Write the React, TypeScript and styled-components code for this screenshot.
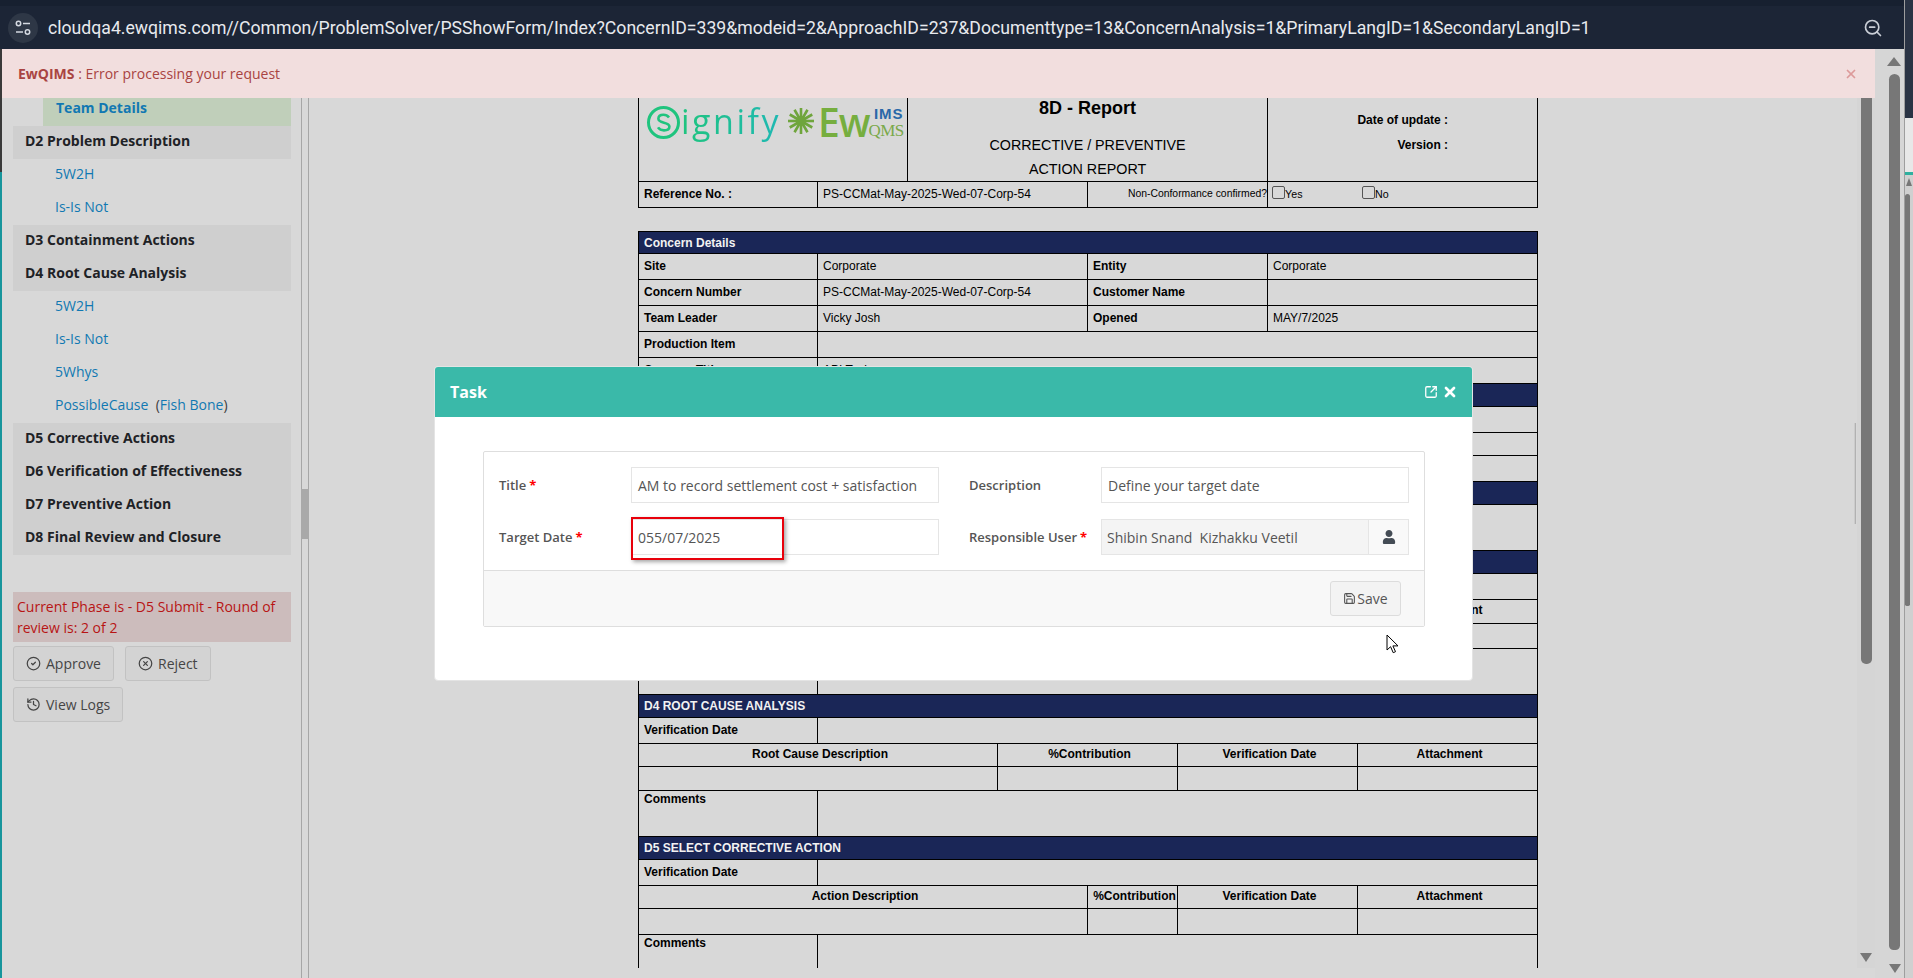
import styled, { createGlobalStyle } from "styled-components";
import {
  CircleCheck,
  CircleX,
  History,
  Save,
  SquareArrowOutUpRight,
  X,
  ZoomOut,
} from "lucide-react";
import { FaUser } from "react-icons/fa";

const GlobalStyle = createGlobalStyle`
  html, body {
    margin: 0;
    padding: 0;
    background: #d8d8d8;
    overflow: hidden;
  }
  * {
    box-sizing: border-box;
  }
`;

const Screen = styled.div`
  position: relative;
  display: flex;
  width: 1913px;
  height: 978px;
  overflow: hidden;
  background: #d8d8d8;
  font-family: "Open Sans", "Noto Sans", sans-serif;
  font-size: 14px;
`;

const Browser = styled.div`
  flex: 1;
  min-width: 0;
  display: flex;
  flex-direction: column;
`;

const TopBar = styled.header`
  height: 49px;
  flex: none;
  display: flex;
  align-items: center;
  padding: 6px 21px 0 8px;
  background: #1c2536;
  box-shadow: inset 0 6px 0 #172030;
`;

const SiteButton = styled.span`
  width: 30px;
  height: 30px;
  flex: none;
  display: flex;
  align-items: center;
  justify-content: center;
  margin: 0 10px 0 0;
  border-radius: 50%;
  background: #2e3746;
`;

const Url = styled.span`
  flex: 1;
  color: #e8eaee;
  font-family: Roboto, "Noto Sans", sans-serif;
  font-size: 17.65px;
  white-space: nowrap;
`;

const Body = styled.div`
  flex: 1;
  min-height: 0;
  display: flex;
`;

const LeftEdge = styled.div`
  width: 2px;
  flex: none;
  display: flex;
  flex-direction: column;
`;

const EdgeDark = styled.div`
  height: 123px;
  background: #3a3a3a;
`;

const EdgeTeal = styled.div`
  flex: 1;
  background: #17959c;
`;

const Page = styled.div`
  flex: 1;
  min-width: 0;
  display: flex;
  flex-direction: column;
`;

const Alert = styled.div`
  height: 49px;
  flex: none;
  display: flex;
  align-items: center;
  justify-content: space-between;
  padding: 0 17px 0 16px;
  background: #f2dede;
  color: #a94442;
  font-size: 14px;
  b {
    font-weight: 700;
  }
`;

const AlertClose = styled.span`
  display: flex;
  color: #dd9a9a;
`;

const Workspace = styled.div`
  flex: 1;
  min-height: 0;
  display: flex;
`;

const Sidebar = styled.nav`
  width: 299px;
  flex: none;
  padding-left: 11px;
  padding-right: 10px;
`;

const TeamRow = styled.a`
  display: flex;
  align-items: center;
  height: 28px;
  padding: 0 0 9px 13px;
  margin-left: 30px;
  background: #c0cfba;
  color: #1178b2;
  font-weight: 700;
`;

const MenuHead = styled.div`
  height: 33px;
  display: flex;
  align-items: center;
  padding: 0 0 5px 12px;
  background: #cfcfcf;
  color: #1e2226;
  font-weight: 700;
  white-space: pre;
`;

const MenuLink = styled.a`
  height: 33px;
  display: flex;
  align-items: center;
  padding: 0 0 5px 42px;
  color: #1178b2;
  white-space: pre;
`;

const Paren = styled.span`
  color: #3d3d3d;
`;

const PhaseBox = styled.div`
  margin-top: 37px;
  height: 50px;
  padding: 4px 4px;
  background: #ccbcbc;
  color: #b81414;
  line-height: 21px;
`;

const ActionRow = styled.div<{ $top: number }>`
  display: flex;
  gap: 11px;
  margin-top: ${(p) => p.$top}px;
`;

const ActionButton = styled.button`
  height: 35px;
  display: flex;
  align-items: center;
  gap: 5px;
  padding: 0 12px;
  border: 1px solid #c2c2c2;
  border-radius: 3px;
  background: #d3d3d3;
  color: #454545;
  font-family: inherit;
  font-size: 14px;
`;

const Splitter = styled.div`
  width: 8px;
  flex: none;
  border-left: 1px solid #a6a6a6;
  border-right: 1px solid #a6a6a6;
  padding-top: 391px;
`;

const SplitHandle = styled.div`
  height: 50px;
  margin-left: -1px;
  margin-right: -1px;
  background: #a9a9a9;
`;

const Main = styled.main`
  flex: 1;
  min-width: 0;
  height: 870px;
  display: flex;
`;

const Doc = styled.div`
  position: relative;
  flex: 1;
  min-width: 0;
  height: 870px;
  overflow: hidden;
  padding-left: 329px;
`;

const ScrollHint = styled.div`
  position: absolute;
  right: 1px;
  top: 325px;
  width: 2px;
  height: 101px;
  background: linear-gradient(to right, #d8d8d8, #a4a4a4);
`;

const Sheet = styled.table<{ $gap?: number }>`
  width: 899px;
  table-layout: fixed;
  border-collapse: collapse;
  font-family: "Liberation Sans", Arial, sans-serif;
  font-size: 12px;
  color: #000;
  margin-bottom: ${(p) => p.$gap ?? 0}px;
`;

const GridCol = styled.col`
  width: 90px;
  &:first-child {
    width: 89px;
  }
`;

const Row = styled.tr<{ $h: number }>`
  height: ${(p) => p.$h}px;
`;

const Cell = styled.td<{ $b?: boolean; $center?: boolean; $top?: boolean; $noTop?: boolean }>`
  padding: ${(p) => (p.$top ? "1px 5px 0" : p.$center ? "0 1px 3px 5px" : "0 5px 2px")};
  border: 1px solid #000;
  border-top: ${(p) => (p.$noTop ? "0" : "1px solid #000")};
  font-weight: ${(p) => (p.$b ? 700 : 400)};
  text-align: ${(p) => (p.$center ? "center" : "left")};
  vertical-align: ${(p) => (p.$top ? "top" : "middle")};
  white-space: nowrap;
  overflow: hidden;
`;

const NavyCell = styled.td`
  padding: 0 5px;
  border: 1px solid #000;
  background: #1a2657;
  color: #f2f2f2;
  font-weight: 700;
  white-space: nowrap;
`;

const LogoCell = styled(Cell)`
  padding: 8px 0 0 8px;
  vertical-align: top;
  overflow: visible;
`;

const Logo = styled.div`
  display: flex;
  align-items: flex-start;
  height: 44px;
`;

const SignifyWord = styled.span`
  margin: -7px 0 0 1px;
  width: 102px;
  height: 46px;
  font-family: "Open Sans", sans-serif;
  font-size: 34px;
  line-height: 44px;
  letter-spacing: 2.5px;
  background: linear-gradient(to right, #1fc47e, #1fb8b4);
  -webkit-background-clip: text;
  background-clip: text;
  color: transparent;
`;

const EwWord = styled.span`
  margin: -7px 0 0 3px;
  color: #76ae3f;
  font-family: "Open Sans", sans-serif;
  font-size: 39px;
  line-height: 46px;
  font-weight: 600;
  letter-spacing: -1px;
`;

const QimsStack = styled.span`
  display: flex;
  flex-direction: column;
  align-items: flex-end;
  width: 35px;
  margin: 1px 0 0 -1px;
`;

const ImsWord = styled.span`
  color: #2a68a8;
  font-family: "Liberation Sans", sans-serif;
  font-size: 15px;
  line-height: 14px;
  font-weight: 700;
  letter-spacing: 1px;
`;

const QmsWord = styled.span`
  color: #7aa94a;
  font-family: "Liberation Serif", serif;
  font-size: 17px;
  line-height: 19px;
  letter-spacing: -0.6px;
`;

const TitleCell = styled(Cell)`
  padding: 0;
  text-align: center;
  vertical-align: top;
`;

const ReportTitle = styled.div`
  height: 35px;
  font-size: 18px;
  font-weight: 700;
  line-height: 20px;
`;

const ReportSub = styled.div`
  font-size: 14.3px;
  line-height: 24px;
`;

const MetaCell = styled(Cell)`
  padding: 10px 89px 0 0;
  vertical-align: top;
  text-align: right;
  font-weight: 700;
  line-height: 25px;
`;

const ConfirmCell = styled(Cell)`
  padding: 0 0 2px;
  text-align: right;
  font-size: 10.4px;
`;

const CheckCell = styled(Cell)`
  padding: 0 0 2px 4px;
`;

const CheckGroup = styled.span`
  display: flex;
  align-items: flex-start;
  font-size: 10.67px;
`;

const CheckItem = styled.label`
  display: flex;
  align-items: flex-end;
  width: 90px;
`;

const CheckBox = styled.input`
  appearance: none;
  width: 13px;
  height: 13px;
  margin: -1px 0 1px;
  border: 1px solid #555;
  border-radius: 2px;
  background: transparent;
`;

const OuterScroll = styled.div`
  width: 29px;
  flex: none;
  display: flex;
  flex-direction: column;
  align-items: flex-end;
  padding: 8px 4px 0 0;
  background: #d6d6d6;
`;

const MainScroll = styled.div`
  width: 18px;
  flex: none;
  height: 870px;
  display: flex;
  flex-direction: column;
  align-items: center;
  background: #d5d5d5;
`;

const Thumb = styled.div<{ $h: number; $top?: number }>`
  width: 11px;
  height: ${(p) => p.$h}px;
  flex: none;
  margin-top: ${(p) => p.$top ?? 0}px;
  background: #777;
  border-radius: ${(p) => (p.$h > 600 ? "6px 6px 5px 5px" : "0 0 5px 5px")};
`;

const ArrowUp = styled.div`
  width: 0;
  height: 0;
  margin-right: -1px;
  border-left: 7px solid transparent;
  border-right: 7px solid transparent;
  border-bottom: 9px solid #777;
`;

const ArrowDown = styled.div<{ $top: number; $shift?: number }>`
  width: 0;
  height: 0;
  margin-top: ${(p) => p.$top}px;
  margin-right: ${(p) => p.$shift ?? 0}px;
  border-left: 6px solid transparent;
  border-right: 6px solid transparent;
  border-top: 9px solid #777;
`;

const RightEdge = styled.aside`
  width: 9px;
  flex: none;
  display: flex;
  flex-direction: column;
  background: #d0d0d0;
  border-left: 1px solid #9e9e9e;
`;

const EdgeTop = styled.div`
  height: 118px;
  background: #2a3344;
`;

const EdgeLight = styled.div`
  height: 54px;
  background: #e8e8e8;
`;

const EdgeStripe = styled.div`
  height: 3px;
  background: #2fb09f;
`;

const EdgeArrow = styled.div`
  width: 0;
  height: 0;
  margin: 3px 0 8px 1px;
  border-left: 3px solid transparent;
  border-right: 3px solid transparent;
  border-bottom: 8px solid #777;
`;

const EdgeThumb = styled.div`
  width: 5px;
  height: 412px;
  background: #777;
  border-radius: 3px 3px 2px 2px;
`;

const Modal = styled.section`
  position: absolute;
  left: 434px;
  top: 366px;
  width: 1039px;
  height: 315px;
  display: flex;
  flex-direction: column;
  background: #fff;
  border: 1px solid #e4e4e4;
  border-radius: 4px;
`;

const ModalHead = styled.div`
  height: 50px;
  flex: none;
  display: flex;
  align-items: center;
  justify-content: space-between;
  padding: 0 14px 0 15px;
  background: #3ab9a9;
  border-radius: 3px 3px 0 0;
  color: #fff;
  font-size: 16px;
  font-weight: 700;
`;

const ModalTools = styled.div`
  display: flex;
  align-items: center;
  gap: 4px;
`;

const ModalBody = styled.div`
  padding: 34px 47px 0 48px;
`;

const Panel = styled.div`
  height: 176px;
  display: flex;
  flex-direction: column;
  border: 1px solid #dedede;
  border-radius: 2px;
`;

const FormGrid = styled.div`
  height: 118px;
  flex: none;
  display: grid;
  grid-template-columns: 132px 338px 132px 308px;
  grid-template-rows: 36px 36px;
  row-gap: 16px;
  padding: 15px 0 0 15px;
  align-items: center;
`;

const Label = styled.label`
  color: #555;
  font-size: 13px;
  font-weight: 600;
  white-space: nowrap;
`;

const Req = styled.span`
  margin-left: 3px;
  color: #f00;
  font-weight: 700;
`;

const FieldText = styled.div`
  width: 308px;
  height: 36px;
  display: flex;
  align-items: center;
  padding: 0 6px;
  border: 1px solid #e5e5e5;
  background: #fff;
  color: #555;
  font-size: 14px;
  white-space: pre;
`;

const DateField = styled(FieldText)`
  position: relative;
`;

const RedMark = styled.span`
  position: absolute;
  left: -1px;
  top: -3px;
  width: 153px;
  height: 43px;
  border: 2px solid #e8000b;
  box-shadow: 2px 2px 4px rgba(0, 0, 0, 0.35);
`;

const UserField = styled.div`
  height: 36px;
  display: flex;
  border: 1px solid #e5e5e5;
`;

const UserName = styled.div`
  flex: 1;
  display: flex;
  align-items: center;
  padding: 0 5px;
  background: #f4f4f4;
  color: #555;
  font-size: 14px;
  white-space: pre;
`;

const UserAddon = styled.div`
  width: 40px;
  flex: none;
  display: flex;
  align-items: center;
  justify-content: center;
  border-left: 1px solid #e5e5e5;
  background: #f9f9f9;
  color: #444c55;
`;

const PanelFoot = styled.div`
  flex: 1;
  display: flex;
  align-items: center;
  justify-content: flex-end;
  padding-right: 23px;
  border-top: 1px solid #dedede;
  background: #f8f8f8;
`;

const SaveButton = styled.button`
  width: 71px;
  height: 35px;
  display: flex;
  align-items: center;
  justify-content: center;
  gap: 1px;
  padding: 0;
  border: 1px solid #dcdcdc;
  border-radius: 3px;
  background: #f3f3f3;
  color: #555;
  font-family: inherit;
  font-size: 14px;
`;

const Pointer = styled.svg`
  position: absolute;
  left: 951px;
  top: 267px;
`;

const FlowerMark = styled.svg`
  flex: none;
  margin: 1px 0 0 4px;
`;

function TuneIcon() {
  return (
    <svg width="16" height="16" viewBox="0 0 16 16" fill="none" stroke="#d5dae2" strokeWidth="1.5">
      <circle cx="3.5" cy="3.5" r="2.2" />
      <path d="M8 3.5h7" />
      <path d="M1 12h7" />
      <circle cx="12.5" cy="12" r="2.2" />
    </svg>
  );
}

function SignifyMark() {
  return (
    <svg width="33" height="33" viewBox="0 0 33 33" fill="none" stroke="#1fc47e">
      <circle cx="16.5" cy="16.5" r="15" strokeWidth="3" />
      <path d="M22 11.5c-1.5-2-3.4-2.7-5.6-2.7-3 0-5 1.6-5 3.9 0 5.2 11 2.7 11 7.8 0 2.4-2.2 3.9-5.4 3.9-2.6 0-4.7-1-6-3" strokeWidth="2.6" />
    </svg>
  );
}

function Flower() {
  const spokes = [0, 30, 60, 90, 120, 150];
  return (
    <FlowerMark width="28" height="28" viewBox="0 0 28 28">
      <g stroke="#6fa53c" strokeWidth="2.6">
        {spokes.map((a) => (
          <path key={a} d="M14 1v26" transform={`rotate(${a} 14 14)`} />
        ))}
      </g>
      <circle cx="14" cy="14" r="5" fill="#6fa53c" />
    </FlowerMark>
  );
}

function Attach4({ first, second }: { first: string; second: number }) {
  return (
    <Row $h={23}>
      <Cell colSpan={second} $b $center>{first}</Cell>
      <Cell colSpan={6 - second} $b $center>%Contribution</Cell>
      <Cell colSpan={2} $b $center>Verification Date</Cell>
      <Cell colSpan={2} $b $center>Attachment</Cell>
    </Row>
  );
}

function Empty4({ second, h }: { second: number; h: number }) {
  return (
    <Row $h={h}>
      <Cell colSpan={second} />
      <Cell colSpan={6 - second} />
      <Cell colSpan={2} />
      <Cell colSpan={2} />
    </Row>
  );
}

function LabelRow({ label, h = 26 }: { label: string; h?: number }) {
  return (
    <Row $h={h}>
      <Cell colSpan={2} $b $top={h > 30}>{label}</Cell>
      <Cell colSpan={8} />
    </Row>
  );
}

function Navy({ title }: { title: string }) {
  return (
    <Row $h={23}>
      <NavyCell colSpan={10}>{title}</NavyCell>
    </Row>
  );
}

function Cols() {
  return (
    <colgroup>
      {Array.from({ length: 10 }).map((_, i) => (
        <GridCol key={i} />
      ))}
    </colgroup>
  );
}

export default function App() {
  return (
    <Screen>
      <GlobalStyle />
      <Browser>
        <TopBar>
          <SiteButton>
            <TuneIcon />
          </SiteButton>
          <Url>cloudqa4.ewqims.com//Common/ProblemSolver/PSShowForm/Index?ConcernID=339&amp;modeid=2&amp;ApproachID=237&amp;Documenttype=13&amp;ConcernAnalysis=1&amp;PrimaryLangID=1&amp;SecondaryLangID=1</Url>
          <ZoomOut size={20} color="#c9ced6" strokeWidth={2} />
        </TopBar>
        <Body>
          <LeftEdge>
            <EdgeDark />
            <EdgeTeal />
          </LeftEdge>
          <Page>
            <Alert>
              <span>
                <b>EwQIMS</b> : Error processing your request
              </span>
              <AlertClose>
                <X size={14} strokeWidth={3} />
              </AlertClose>
            </Alert>
            <Workspace>
              <Sidebar>
                <TeamRow>Team Details</TeamRow>
                <MenuHead>D2 Problem Description</MenuHead>
                <MenuLink>5W2H</MenuLink>
                <MenuLink>Is-Is Not</MenuLink>
                <MenuHead>D3 Containment Actions</MenuHead>
                <MenuHead>D4 Root Cause Analysis</MenuHead>
                <MenuLink>5W2H</MenuLink>
                <MenuLink>Is-Is Not</MenuLink>
                <MenuLink>5Whys</MenuLink>
                <MenuLink>
                  PossibleCause  <Paren>(</Paren>Fish Bone<Paren>)</Paren>
                </MenuLink>
                <MenuHead>D5 Corrective Actions</MenuHead>
                <MenuHead>D6 Verification of Effectiveness</MenuHead>
                <MenuHead>D7 Preventive Action</MenuHead>
                <MenuHead>D8 Final Review and Closure</MenuHead>
                <PhaseBox>Current Phase is - D5 Submit - Round of review is: 2 of 2</PhaseBox>
                <ActionRow $top={4}>
                  <ActionButton>
                    <CircleCheck size={15} />
                    Approve
                  </ActionButton>
                  <ActionButton>
                    <CircleX size={15} />
                    Reject
                  </ActionButton>
                </ActionRow>
                <ActionRow $top={6}>
                  <ActionButton>
                    <History size={15} />
                    View Logs
                  </ActionButton>
                </ActionRow>
              </Sidebar>
              <Splitter>
                <SplitHandle />
              </Splitter>
              <Main>
                <Doc>
                  <Sheet $gap={23}>
                    <Cols />
                    <tbody>
                      <Row $h={82}>
                        <LogoCell colSpan={3} $noTop>
                          <Logo>
                            <SignifyMark />
                            <SignifyWord>ignify</SignifyWord>
                            <Flower />
                            <EwWord>Ew</EwWord>
                            <QimsStack>
                              <ImsWord>IMS</ImsWord>
                              <QmsWord>QMS</QmsWord>
                            </QimsStack>
                          </Logo>
                        </LogoCell>
                        <TitleCell colSpan={4} $noTop>
                          <ReportTitle>8D - Report</ReportTitle>
                          <ReportSub>CORRECTIVE / PREVENTIVE</ReportSub>
                          <ReportSub>ACTION REPORT</ReportSub>
                        </TitleCell>
                        <MetaCell colSpan={3} $noTop>
                          <div>Date of update :</div>
                          <div>Version :</div>
                        </MetaCell>
                      </Row>
                      <Row $h={26}>
                        <Cell colSpan={2} $b>Reference No. :</Cell>
                        <Cell colSpan={3}>PS-CCMat-May-2025-Wed-07-Corp-54</Cell>
                        <ConfirmCell colSpan={2}>Non-Conformance confirmed?</ConfirmCell>
                        <CheckCell colSpan={3}>
                          <CheckGroup>
                            <CheckItem>
                              <CheckBox type="checkbox" />
                              Yes
                            </CheckItem>
                            <CheckItem>
                              <CheckBox type="checkbox" />
                              No
                            </CheckItem>
                          </CheckGroup>
                        </CheckCell>
                      </Row>
                    </tbody>
                  </Sheet>
                  <Sheet>
                    <Cols />
                    <tbody>
                      <Row $h={22}>
                        <NavyCell colSpan={10}>Concern Details</NavyCell>
                      </Row>
                      <Row $h={26}>
                        <Cell colSpan={2} $b>Site</Cell>
                        <Cell colSpan={3}>Corporate</Cell>
                        <Cell colSpan={2} $b>Entity</Cell>
                        <Cell colSpan={3}>Corporate</Cell>
                      </Row>
                      <Row $h={26}>
                        <Cell colSpan={2} $b>Concern Number</Cell>
                        <Cell colSpan={3}>PS-CCMat-May-2025-Wed-07-Corp-54</Cell>
                        <Cell colSpan={2} $b>Customer Name</Cell>
                        <Cell colSpan={3} />
                      </Row>
                      <Row $h={26}>
                        <Cell colSpan={2} $b>Team Leader</Cell>
                        <Cell colSpan={3}>Vicky Josh</Cell>
                        <Cell colSpan={2} $b>Opened</Cell>
                        <Cell colSpan={3}>MAY/7/2025</Cell>
                      </Row>
                      <LabelRow label="Production Item" />
                      <Row $h={26}>
                        <Cell colSpan={2} $b>Concern Title</Cell>
                        <Cell colSpan={8}>API Task</Cell>
                      </Row>
                      <Navy title="" />
                      <LabelRow label="" />
                      <LabelRow label="" h={23} />
                      <LabelRow label="" />
                      <Navy title="" />
                      <LabelRow label="" h={46} />
                      <Navy title="" />
                      <LabelRow label="" />
                      <Row $h={24}>
                        <Cell colSpan={4} />
                        <Cell colSpan={2} />
                        <Cell colSpan={2} />
                        <Cell colSpan={2} $b $center>Attachment</Cell>
                      </Row>
                      <Empty4 second={4} h={25} />
                      <LabelRow label="" h={46} />
                      <Navy title="D4 ROOT CAUSE ANALYSIS" />
                      <LabelRow label="Verification Date" />
                      <Attach4 first="Root Cause Description" second={4} />
                      <Empty4 second={4} h={24} />
                      <LabelRow label="Comments" h={46} />
                      <Navy title="D5 SELECT CORRECTIVE ACTION" />
                      <LabelRow label="Verification Date" />
                      <Attach4 first="Action Description" second={5} />
                      <Empty4 second={5} h={26} />
                      <LabelRow label="Comments" h={46} />
                    </tbody>
                  </Sheet>
                  <ScrollHint />
                </Doc>
                <MainScroll>
                  <Thumb $h={566} />
                  <ArrowDown $top={289} />
                </MainScroll>
              </Main>
            </Workspace>
          </Page>
          <OuterScroll>
            <ArrowUp />
            <Thumb $h={876} $top={8} />
            <ArrowDown $top={14} $shift={-1} />
          </OuterScroll>
        </Body>
      </Browser>
      <RightEdge>
        <EdgeTop />
        <EdgeLight />
        <EdgeStripe />
        <EdgeArrow />
        <EdgeThumb />
      </RightEdge>

      <Modal>
        <ModalHead>
          Task
          <ModalTools>
            <SquareArrowOutUpRight size={14} strokeWidth={2.2} />
            <X size={16} strokeWidth={4} />
          </ModalTools>
        </ModalHead>
        <ModalBody>
          <Panel>
            <FormGrid>
              <Label>
                Title<Req>*</Req>
              </Label>
              <FieldText>AM to record settlement cost + satisfaction</FieldText>
              <Label>Description</Label>
              <FieldText>Define your target date</FieldText>
              <Label>
                Target Date<Req>*</Req>
              </Label>
              <DateField>
                055/07/2025
                <RedMark />
              </DateField>
              <Label>
                Responsible User<Req>*</Req>
              </Label>
              <UserField>
                <UserName>Shibin Snand  Kizhakku Veetil</UserName>
                <UserAddon>
                  <FaUser size={14} />
                </UserAddon>
              </UserField>
            </FormGrid>
            <PanelFoot>
              <SaveButton>
                <Save size={13} />
                Save
              </SaveButton>
            </PanelFoot>
          </Panel>
        </ModalBody>
        <Pointer width="13" height="20" viewBox="0 0 13 20">
          <path d="M1 1v15l3.6-3.3 2.6 6 2.3-1-2.6-5.8H12z" fill="#fff" stroke="#000" strokeWidth="1" />
        </Pointer>
      </Modal>
    </Screen>
  );
}
